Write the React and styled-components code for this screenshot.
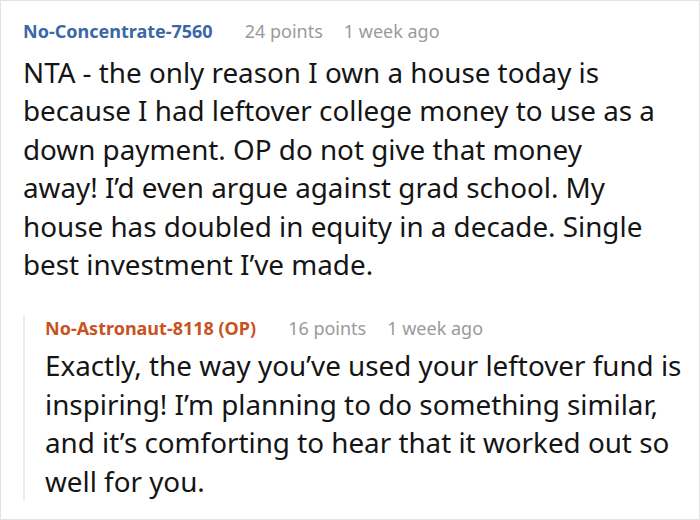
import React from "react";
import styled, { createGlobalStyle } from "styled-components";

const GlobalStyle = createGlobalStyle`
  html, body {
    margin: 0;
    padding: 0;
    background: #fff;
  }
`;

const Card = styled.div`
  box-sizing: border-box;
  width: 700px;
  height: 520px;
  border: 1px solid #e2e2e2;
  background: #fff;
  padding: 18px 0 0 22px;
  font-family: "Noto Sans", "Open Sans", sans-serif;
  overflow: hidden;
`;

const CommentBox = styled.div`
  padding-right: ${(p) => p.$right}px;
`;

const Header = styled.div`
  display: flex;
  align-items: baseline;
  gap: 21px;
  font-size: 18px;
  line-height: 24px;
`;

const Author = styled.span`
  font-weight: 700;
  margin-right: 11px;
  color: ${(p) => (p.$op ? "#c8531f" : "#3a68a6")};
`;

const Meta = styled.span`
  color: #9a9a9a;
`;

const Body = styled.p`
  margin: ${(p) => p.$gap}px 0 0 0;
  font-size: 27.8px;
  line-height: 38.4px;
  color: #151515;
`;

const Reply = styled.div`
  margin-top: 33px;
  border-left: 2px solid #ececec;
  padding-left: 20px;
`;

const Comment = ({ author, op, points, time, text, gap, right = 0 }) => (
  <CommentBox $right={right}>
    <Header>
      <Author $op={op}>{author}</Author>
      <Meta>{points}</Meta>
      <Meta>{time}</Meta>
    </Header>
    <Body $gap={gap}>{text}</Body>
  </CommentBox>
);

export default function App() {
  return (
    <>
      <GlobalStyle />
      <Card>
        <Comment
          author="No-Concentrate-7560"
          points="24 points"
          time="1 week ago"
          gap={10}
          right={38}
          text="NTA - the only reason I own a house today is because I had leftover college money to use as a down payment. OP do not give that money away! I’d even argue against grad school. My house has doubled in equity in a decade. Single best investment I’ve made."
        />
        <Reply>
          <Comment
            author="No-Astronaut-8118 (OP)"
            op
            points="16 points"
            time="1 week ago"
            gap={6}
            text="Exactly, the way you’ve used your leftover fund is inspiring! I’m planning to do something similar, and it’s comforting to hear that it worked out so well for you."
          />
        </Reply>
      </Card>
    </>
  );
}
